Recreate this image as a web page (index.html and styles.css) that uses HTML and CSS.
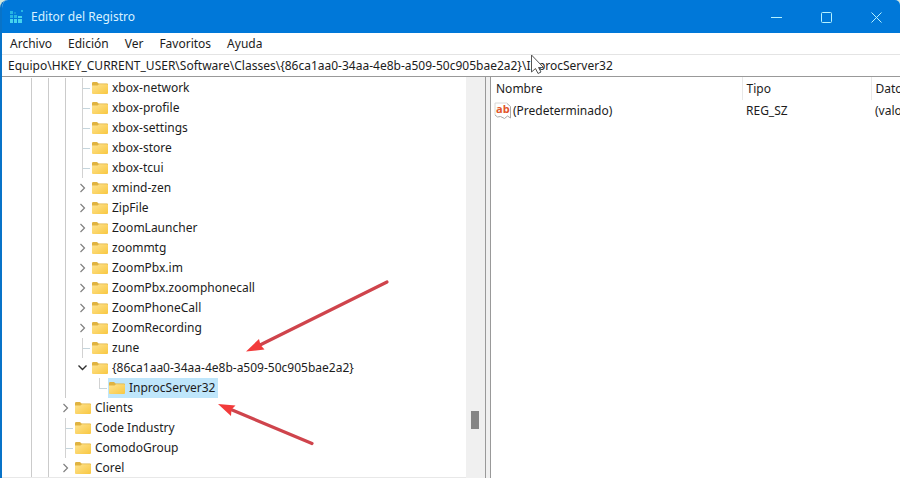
FILE: index.html
```html
<!DOCTYPE html>
<html lang="es">
<head>
<meta charset="utf-8">
<title>Editor del Registro</title>
<link rel="stylesheet" href="styles.css">
</head>
<body>
<svg class="defs" aria-hidden="true">
  <defs>
    <linearGradient id="gold" x1="0" y1="0" x2="1" y2="1"><stop offset="0" stop-color="#fee391"/><stop offset="1" stop-color="#f8c740"/></linearGradient>
    <symbol id="folder" viewBox="0 0 16 14"><path d="M0 2.200Q0 1 1.200 1H5l1.600 1.400H15Q16 2.400 16 3.400V7H0Z" fill="#e0b340"/><path d="M0 4.500H5.500L7 3.300H15Q16 3.300 16 4.300V12Q16 13 15 13H1Q0 13 0 12Z" fill="url(#gold)"/></symbol>
    <symbol id="right" viewBox="0 0 12 12"><path d="M3.500 2l4 4-4 4" fill="none" stroke="#808080" stroke-width="1.200"/></symbol>
    <symbol id="down" viewBox="0 0 12 12"><path d="M1.500 3.500l4 4 4-4" fill="none" stroke="#303030" stroke-width="1.400"/></symbol>
  </defs>
</svg>
<div class="window">
  <header class="titlebar">
    <svg class="app-icon" viewBox="0 0 16 16" aria-hidden="true"><path d="M1 2h3v3H1zM1 6h3v3H1zM5 6h3v3H5z" fill="#27b5e4"/><path d="M1 10h3v4H1zM5 10h3v4H5zM9 10h4v4H9zM9 7h4v2H9z" fill="#45d4ee"/><path d="M5 3h2v2H5z" fill="#1596d8"/><path d="M12 1h2v2h-2z" fill="#27b5e4"/></svg>
    <h1>Editor del Registro</h1>
    <div class="controls">
      <button aria-label="Minimizar"><svg viewBox="0 0 12 12"><path d="M0 6.500h11"/></svg></button>
      <button aria-label="Maximizar"><svg viewBox="0 0 12 12"><rect x=".5" y="1.500" width="10" height="10" rx="1"/></svg></button>
      <button aria-label="Cerrar"><svg viewBox="0 0 12 12"><path d="M.5 1.500l10 10M10.500 1.500l-10 10"/></svg></button>
    </div>
  </header>
  <nav class="menu">
    <button>Archivo</button><button>Edición</button><button>Ver</button><button>Favoritos</button><button>Ayuda</button>
  </nav>
  <input class="address" aria-label="Ruta" value="Equipo\HKEY_CURRENT_USER\Software\Classes\{86ca1aa0-34aa-4e8b-a509-50c905bae2a2}\InprocServer32">
  <main class="panes">
    <ul class="tree" id="tree"></ul>
    <div class="scrollbar"><div class="thumb"></div></div>
    <div class="splitter"></div>
    <section class="values">
      <table>
        <thead><tr><th class="name">Nombre</th><th class="type">Tipo</th><th>Datos</th></tr></thead>
        <tbody><tr><td class="name"><span class="entry"><svg class="string-icon" viewBox="0 0 18 18" aria-hidden="true"><path d="M1 1h12l4 3v12l-3-2-3 2.500-4-2-3 1-3-2z" fill="#fff"/><path d="M1 13V1H13" fill="none" stroke="#d8d8d8"/><path d="M13 1.500l3.500 3V16l-3-2-3 2.500-4-2-3 .500-2.500-2" fill="none" stroke="#a8a8a8"/><text x="2" y="11">ab</text></svg>(Predeterminado)</span></td><td>REG_SZ</td><td>(valor no establecido)</td></tr></tbody>
      </table>
    </section>
  </main>
  <svg class="marks" viewBox="0 0 900 478" aria-hidden="true">
    <g stroke="#cf444c" stroke-width="3.200" stroke-linecap="round"><path d="M387 282L260 345"/><path d="M312 443.500L231 409.500"/></g>
    <g fill="#f23b3b"><path d="M246 351.500L259 339l1.500 6 4 4.500z"/><path d="M218 404l17.500 1.500-4 4-.5 6.500z"/></g>
    <path d="M531.500 55v17l4-3.500 2.500 5 3-1.500-2.500-4.500h5z" fill="#fff" stroke="#555"/>
  </svg>
</div>
<script src="tree.js"></script>
</body>
</html>
```
FILE: styles.css
```css
* { box-sizing: border-box; }
body { margin: 0; background: #d5e8dc; color: #1c1c1c; font: 12px/20px "Noto Sans", "Liberation Sans", sans-serif; overflow: hidden; }
button, input { font: inherit; color: inherit; border: 0; background: none; padding: 0; }
.defs { position: absolute; width: 0; height: 0; }
.window { position: relative; display: flex; flex-direction: column; height: 100vh; border-left: 2px solid #0873c8; border-radius: 8px 5px 0 0; background: #fff; overflow: hidden; }
.titlebar { display: flex; align-items: center; flex: none; height: 33px; padding-left: 7px; background: #0078d9; color: #d9f1ff; }
.app-icon { width: 16px; height: 16px; }
h1 { margin: 0 auto 0 6px; font-size: 12px; font-weight: 400; }
.controls { display: flex; }
.controls button { display: grid; place-items: center; width: 50px; height: 32px; padding-left: 3px; }
.controls svg { width: 12px; height: 12px; fill: none; stroke: #b5f2ff; }
.menu { display: flex; flex: none; gap: 16px; height: 22px; padding-left: 8px; border-bottom: 1px solid #e4e4e4; }
.address { flex: none; width: 100%; height: 22px; padding-left: 6px; border-bottom: 1px solid #999; }
.panes { display: flex; flex: 1; min-height: 0; }
.tree { flex: 1 1 464px; min-width: 0; margin: 0; padding: 1px 0 0 21px; list-style: none; overflow: hidden; border-bottom: 1px solid #e8e8e8; }
.tree li { display: flex; height: 20px; white-space: nowrap; }
.guide { flex: none; width: 17px; display: grid; place-items: center; }
.guide svg { width: 12px; height: 12px; }
.line { background: linear-gradient(#cbcbcb, #cbcbcb) 8px 0 / 1px 100% no-repeat; }
.branch { background: linear-gradient(#d2d2d2, #d2d2d2) 8px 0 / 1px 100% no-repeat, linear-gradient(#c5d5dc, #c5d5dc) 8px 10px / 8px 1px no-repeat; }
.end { background: linear-gradient(#d2d2d2, #d2d2d2) 8px 0 / 1px 10px no-repeat, linear-gradient(#c5d5dc, #c5d5dc) 8px 10px / 8px 1px no-repeat; }
.node { display: flex; align-items: center; gap: 4px; padding: 0 3px 0 1px; }
.node svg { width: 16px; height: 14px; }
.selected { background: #bfe6fb; }
.scrollbar { flex: none; width: 19px; background: #f0f0f0; padding: 334px 6px 0 5px; }
.thumb { height: 18px; background: #868686; }
.splitter { flex: none; width: 6px; background: #f0f0f0; border: solid #999; border-width: 0 1px; }
.values { flex: 1 1 409px; min-width: 0; overflow: hidden; }
table { width: 560px; table-layout: fixed; border-collapse: collapse; text-align: left; }
th, td { height: 22px; padding: 0 0 0 4px; font-weight: 400; white-space: nowrap; }
th { height: 23px; border-right: 1px solid #e8e8e8; }
.name { width: 251px; padding-left: 5px; }
.type { width: 129px; }
td.name { padding-left: 3px; }
.entry { display: flex; align-items: center; gap: 1px; }
.string-icon { width: 18px; height: 18px; }
.string-icon text { font: bold 11px "Open Sans", sans-serif; fill: #e2562c; }
.marks { position: absolute; left: -2px; top: 0; width: 900px; height: 478px; pointer-events: none; }
```
FILE: tree.js
```js
// Each row: guide codes, label. l = line, b = branch, e = last branch, s = blank, r = collapsed, d = expanded.
const rows = [
  ["lllb", "xbox-network"], ["lllb", "xbox-profile"], ["lllb", "xbox-settings"], ["lllb", "xbox-store"], ["lllb", "xbox-tcui"],
  ["lllr", "xmind-zen"], ["lllr", "ZipFile"], ["lllr", "ZoomLauncher"], ["lllr", "zoommtg"], ["lllr", "ZoomPbx.im"],
  ["lllr", "ZoomPbx.zoomphonecall"], ["lllr", "ZoomPhoneCall"], ["lllr", "ZoomRecording"], ["lllb", "zune"],
  ["llld", "{86ca1aa0-34aa-4e8b-a509-50c905bae2a2}"], ["lllse", "InprocServer32", true],
  ["llr", "Clients"], ["llb", "Code Industry"], ["llb", "ComodoGroup"], ["llr", "Corel"]
];
const guides = {
  l: '<span class="guide line"></span>', b: '<span class="guide branch"></span>', e: '<span class="guide end"></span>', s: '<span class="guide"></span>',
  r: '<span class="guide"><svg><use href="#right"/></svg></span>', d: '<span class="guide"><svg><use href="#down"/></svg></span>'
};
document.getElementById("tree").innerHTML = rows.map(([codes, label, selected]) =>
  `<li>${[...codes].map(c => guides[c]).join("")}<span class="node${selected ? " selected" : ""}"><svg><use href="#folder"/></svg>${label}</span></li>`
).join("");
```
